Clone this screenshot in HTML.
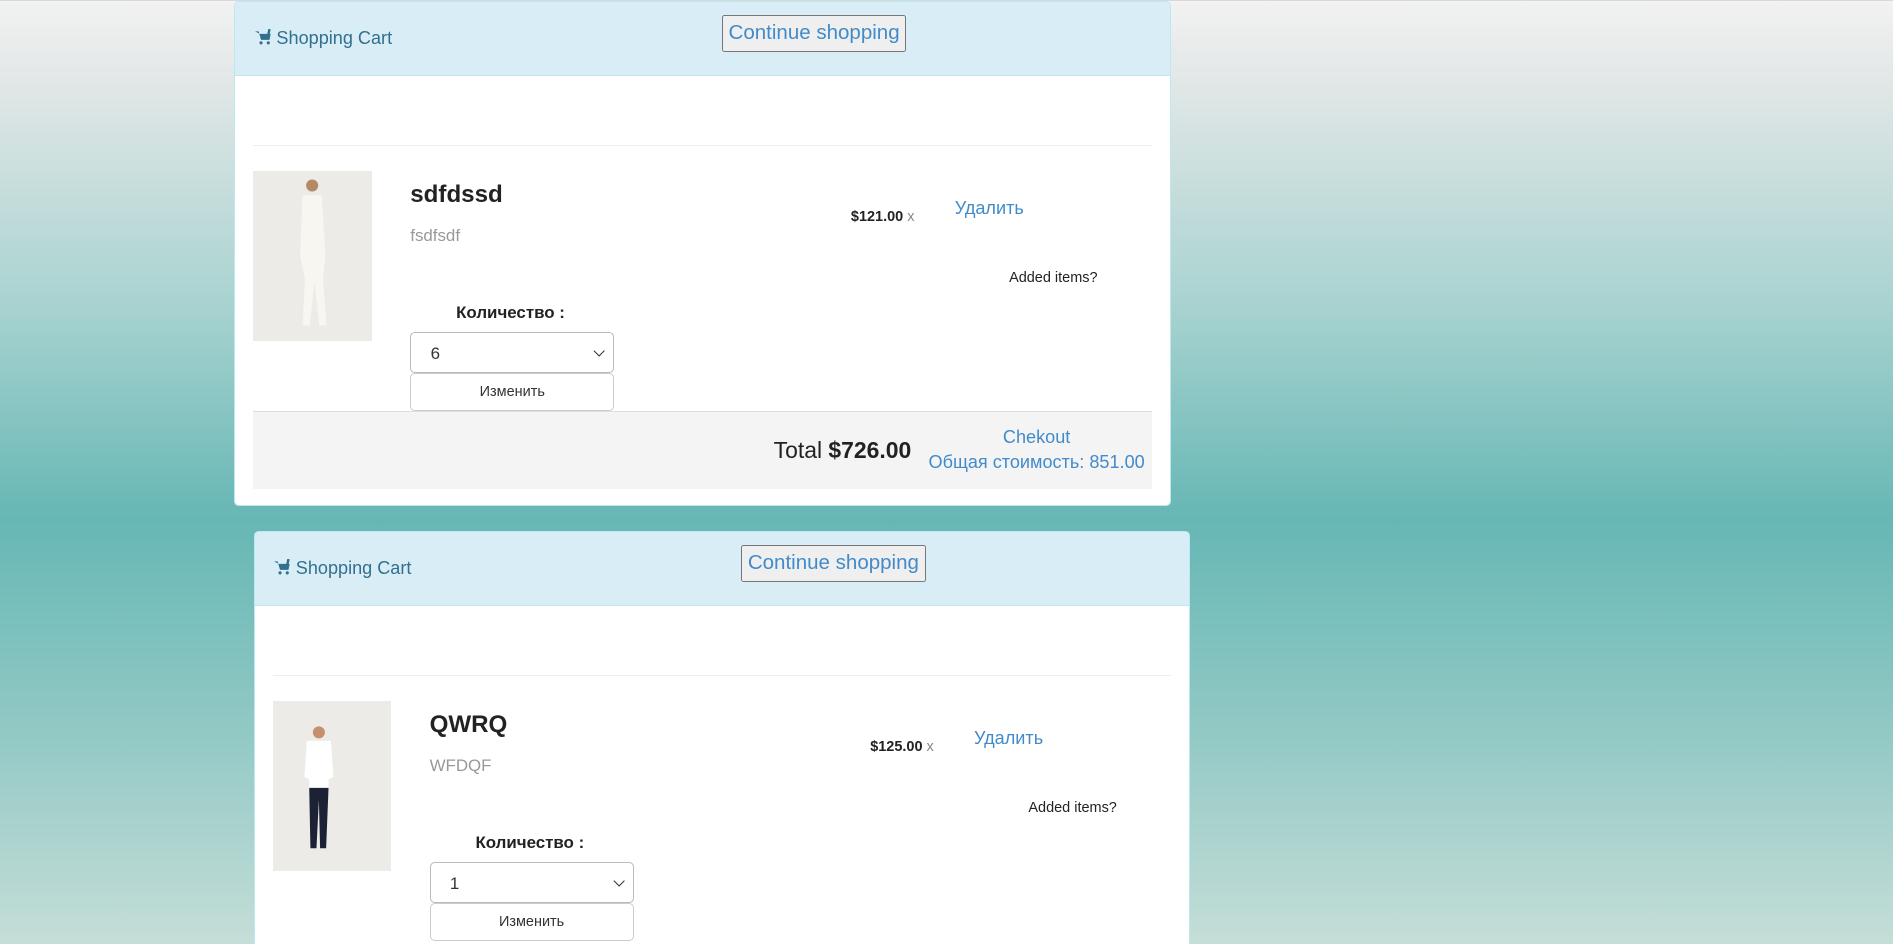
<!DOCTYPE html>
<html><head><meta charset="utf-8"><style>
html{margin:0;padding:0;width:1893px;height:944px;overflow:hidden;
background:linear-gradient(to bottom,#f2f2f2 0px,#e4e8e8 72px,#a9d3d0 302px,#66b7b5 519px,#90c8c4 724px,#c5ded8 944px)}
body{margin:0;padding:0;width:1568px;height:782px;overflow:hidden;zoom:1.20727;font-family:"Liberation Sans",Arial,sans-serif;color:#333;background:transparent;position:relative}
.panel{position:absolute;width:776px;background:#fff;border-radius:4px;border:1px solid #bce8f1;box-sizing:border-box;overflow:hidden}
.hd{height:61px;background:#d9edf7;border-bottom:1px solid #bce8f1;position:relative;box-sizing:border-box}
.sc{position:absolute;left:16px;top:21px;font-size:15px;color:#31708f}
.cs{position:absolute;left:403px;top:11px;width:153px;height:30px;box-sizing:border-box;border:1px solid #767676;background:#efefef;border-radius:2px;color:#428bca;font-size:17px;text-align:center;line-height:28px}
.hr{position:absolute;left:15px;right:15px;top:118px;border-top:1px solid #eee}
.img{position:absolute;left:15px;top:140px;width:98px;height:141px;background:#ecebe8}
.t{position:absolute;left:145px;top:148px;font-size:20px;font-weight:bold;color:#222}
.d{position:absolute;left:145px;top:185px;font-size:14px;color:#999}
.p{position:absolute;left:510px;top:171px;font-size:12px;font-weight:bold;color:#222}
.p span{color:#888;font-weight:normal}
.del{position:absolute;left:596px;top:162px;font-size:15px;color:#428bca}
.ai{position:absolute;left:641px;top:222px;font-size:12px;color:#222}
.q{position:absolute;left:183px;top:249px;font-size:14px;font-weight:bold;color:#222}
.sel{position:absolute;left:145px;top:273px;width:169px;height:34px;box-sizing:border-box;border:1px solid #bbb;border-radius:4px;font-size:14px;padding:9px 0 0 16px}
.sel:after{content:"";position:absolute;right:8px;top:12px;width:6px;height:6px;border-right:1.5px solid #333;border-bottom:1.5px solid #333;transform:rotate(45deg)}
.btn{position:absolute;left:145px;top:307px;width:169px;height:32px;box-sizing:border-box;border:1px solid #ccc;border-radius:4px;font-size:12px;text-align:center;line-height:30px;color:#333}
.ft{position:absolute;left:15px;right:15px;top:339px;height:63px;background:#f4f4f4;border-top:1px solid #ddd}
.tot{position:absolute;left:431px;top:20px;font-size:19px;color:#222}
.ck{position:absolute;right:6px;top:10px;text-align:center;font-size:15px;color:#428bca;line-height:21px;white-space:nowrap}
</style></head><body>
<div style="position:absolute;left:0;right:0;top:0;height:1px;background:#d8d8d8"></div>

<div class="panel" style="left:194px;top:1px;height:418px">
<div class="hd"><div class="sc"><svg width="14" height="13" viewBox="0 0 14 13" style="vertical-align:-1px"><path d="M0 2h3l2 7h7l1-5H4" fill="#31708f"/><path d="M12 0l-1 5" stroke="#31708f" stroke-width="2"/><circle cx="5" cy="11.5" r="1.3" fill="#31708f"/><circle cx="11" cy="11.5" r="1.3" fill="#31708f"/></svg> Shopping Cart</div><div class="cs">Continue shopping</div></div>
<div class="hr"></div>
<div class="img"><svg width="98" height="141"><circle cx="49" cy="12" r="5" fill="#b38a64"/><path d="M41 20h16l3 50-2 20 3 38h-6l-4-36-4 36h-6l2-38-4-20z" fill="#f7f6f0"/></svg></div>
<div class="t">sdfdssd</div><div class="d">fsdfsdf</div>
<div class="p">$121.00 <span>x</span></div><div class="del">Удалить</div><div class="ai">Added items?</div>
<div class="q">Количество :</div><div class="sel">6</div><div class="btn">Изменить</div>
<div class="ft"><div class="tot">Total <b>$726.00</b></div><div class="ck">Chekout<br>Общая стоимость: 851.00</div></div>
</div>

<div class="panel" style="left:210px;top:440px;height:342px;border-bottom:none;border-radius:4px 4px 0 0">
<div class="hd"><div class="sc"><svg width="14" height="13" viewBox="0 0 14 13" style="vertical-align:-1px"><path d="M0 2h3l2 7h7l1-5H4" fill="#31708f"/><path d="M12 0l-1 5" stroke="#31708f" stroke-width="2"/><circle cx="5" cy="11.5" r="1.3" fill="#31708f"/><circle cx="11" cy="11.5" r="1.3" fill="#31708f"/></svg> Shopping Cart</div><div class="cs">Continue shopping</div></div>
<div class="hr"></div>
<div class="img"><svg width="98" height="141"><circle cx="38" cy="26" r="5" fill="#c49070"/><path d="M28 33h20l2 30-4 2v8h-16v-8l-4-2z" fill="#fff"/><path d="M30 72h16l-2 50h-5l-1-40-2 40h-5z" fill="#1c2233"/></svg></div>
<div class="t">QWRQ</div><div class="d">WFDQF</div>
<div class="p">$125.00 <span>x</span></div><div class="del">Удалить</div><div class="ai">Added items?</div>
<div class="q">Количество :</div><div class="sel">1</div><div class="btn">Изменить</div>
</div>
</body></html>
